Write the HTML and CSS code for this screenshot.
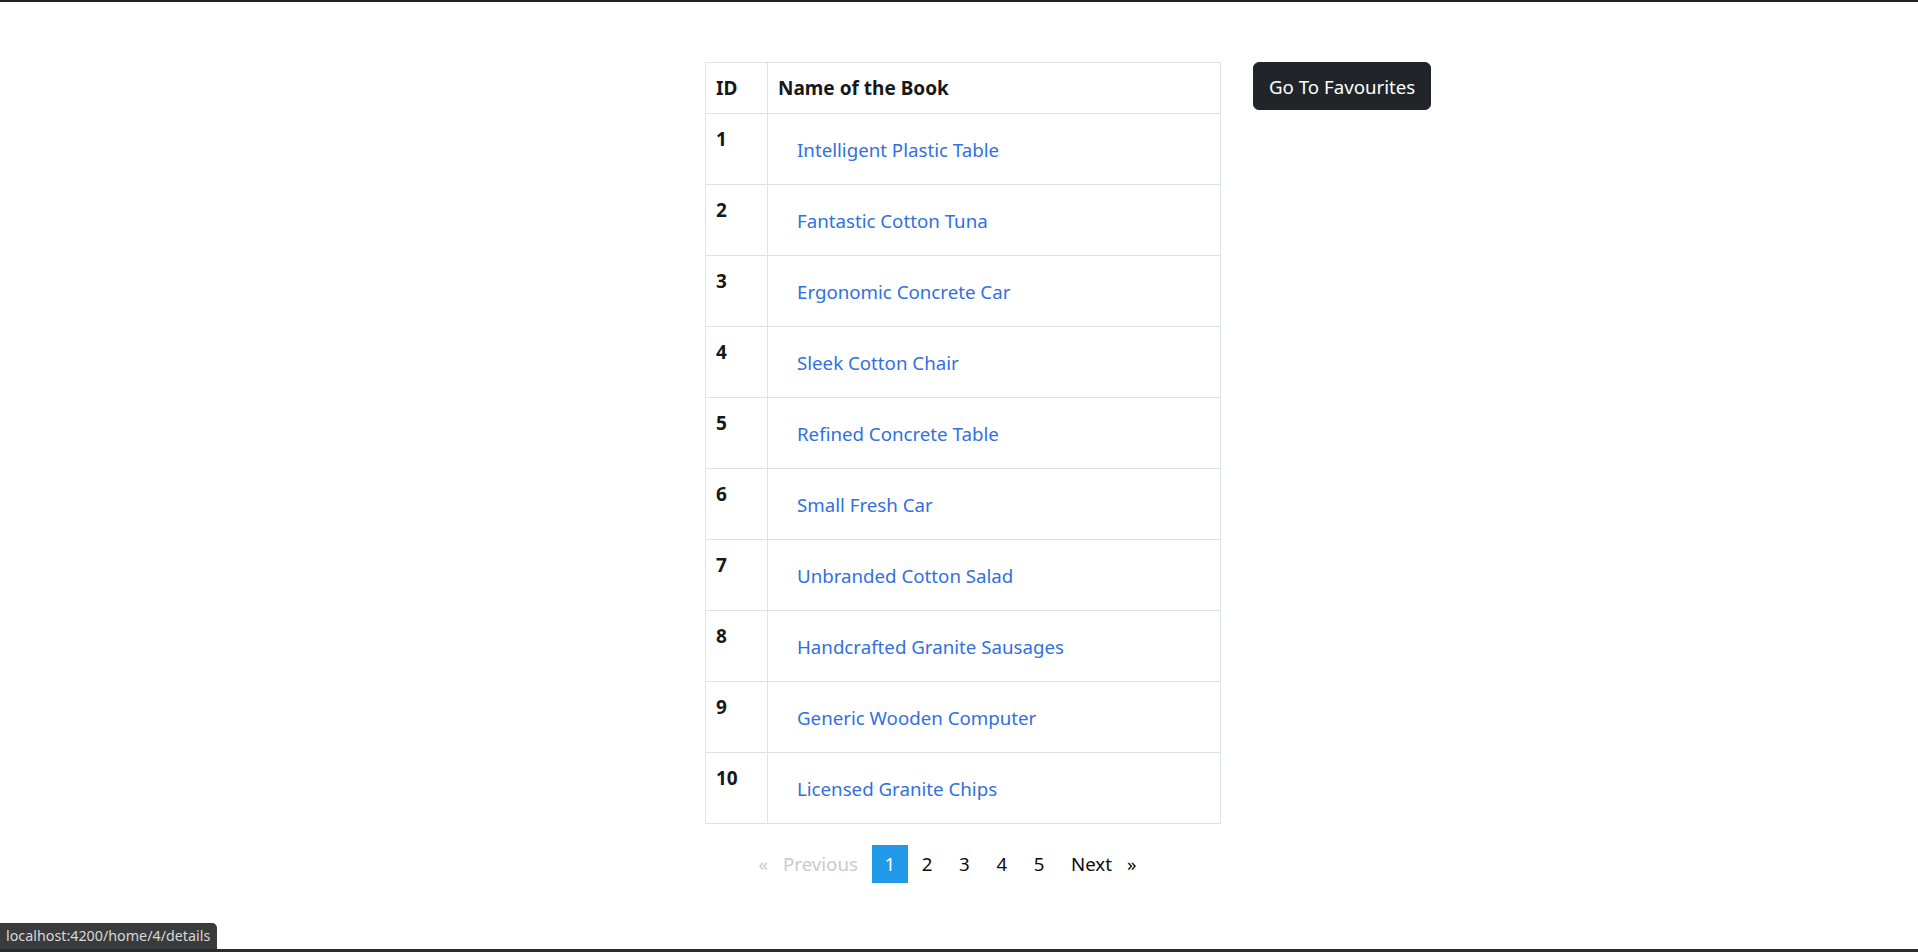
FILE: index.html
```html
<!DOCTYPE html>
<html lang="en">
<head>
<meta charset="utf-8">
<title>Books</title>
<link rel="stylesheet" href="styles.css">
</head>
<body>
<main class="page">
  <section class="list">
    <table class="books">
      <colgroup><col class="col-id"><col></colgroup>
      <thead>
        <tr><th>ID</th><th>Name of the Book</th></tr>
      </thead>
      <tbody>
        <tr><th>1</th><td><a class="book-link" href="#">Intelligent Plastic Table</a></td></tr>
        <tr><th>2</th><td><a class="book-link" href="#">Fantastic Cotton Tuna</a></td></tr>
        <tr><th>3</th><td><a class="book-link" href="#">Ergonomic Concrete Car</a></td></tr>
        <tr><th>4</th><td><a class="book-link" href="#">Sleek Cotton Chair</a></td></tr>
        <tr><th>5</th><td><a class="book-link" href="#">Refined Concrete Table</a></td></tr>
        <tr><th>6</th><td><a class="book-link" href="#">Small Fresh Car</a></td></tr>
        <tr><th>7</th><td><a class="book-link" href="#">Unbranded Cotton Salad</a></td></tr>
        <tr><th>8</th><td><a class="book-link" href="#">Handcrafted Granite Sausages</a></td></tr>
        <tr><th>9</th><td><a class="book-link" href="#">Generic Wooden Computer</a></td></tr>
        <tr><th>10</th><td><a class="book-link" href="#">Licensed Granite Chips</a></td></tr>
      </tbody>
    </table>
    <nav class="pager">
      <ul>
        <li class="prev disabled"><span class="arrow-l">«</span>Previous</li>
        <li class="current">1</li>
        <li><a href="#">2</a></li>
        <li><a href="#">3</a></li>
        <li><a href="#">4</a></li>
        <li><a href="#">5</a></li>
        <li class="next"><a href="#">Next<span class="arrow-r">»</span></a></li>
      </ul>
    </nav>
  </section>
  <a class="fav-btn" href="#">Go To Favourites</a>
</main>
<div class="status">localhost:4200/home/4/details</div>
<div class="bottom-line"></div>
</body>
</html>
```
FILE: styles.css
```css
html, body {
  margin: 0;
  padding: 0;
  background: #fff;
}
body {
  border-top: 2px solid #222;
  font-family: "Noto Sans", "Open Sans", sans-serif;
  color: #212529;
  height: 950px;
  box-sizing: border-box;
  overflow: hidden;
}
.page {
  display: flex;
  align-items: flex-start;
  gap: 66px;
  padding: 60px 0 0 705px;
}
.list {
  width: 482px;
}
.books {
  width: 516px;
  border-collapse: collapse;
  table-layout: fixed;
  font-size: 19px;
}
.col-id {
  width: 62px;
}
.books th,
.books td {
  border: 1px solid #dee2e6;
  padding: 10px;
  line-height: 30px;
  text-align: left;
  vertical-align: top;
  font-weight: 700;
  color: #161819;
}
.books td {
  font-weight: 400;
}
.book-link {
  display: inline-block;
  padding: 11px 16px 9px 19px;
  line-height: 30px;
  color: #3170e0;
  text-decoration: none;
  font-size: 18.7px;
}
.pager {
  margin-top: 21px;
  padding-left: 4px;
  text-align: center;
}
.pager ul {
  list-style: none;
  margin: 0;
  padding: 0;
  display: inline-flex;
  font-size: 18.7px;
  line-height: 30px;
}
.pager li {
  margin-right: 1px;
  padding: 4px 12.8px;
  color: #0a0a0a;
}
.pager li a {
  color: #0a0a0a;
  text-decoration: none;
}
.pager li:has(a) {
  padding: 0;
}
.pager li a {
  display: block;
  padding: 4px 12.8px;
}
.pager .disabled {
  color: #cacaca;
}
.pager .current {
  background: #2199e8;
  color: #fefefe;
}
.arrow-l {
  margin-right: 15px;
}
.arrow-r {
  margin-left: 15px;
}
.fav-btn {
  display: inline-block;
  background: #212529;
  color: #fff;
  border: 1px solid #212529;
  border-radius: 6px;
  padding: 9px 15px 7px;
  font-size: 18.7px;
  line-height: 30px;
  text-decoration: none;
}
.status {
  position: fixed;
  left: 0;
  bottom: 3px;
  height: 26px;
  padding: 0 7px 0 6px;
  background: #3a3b3d;
  color: #d8d8d8;
  font-size: 14.3px;
  line-height: 26px;
  border-top-right-radius: 5px;
}
.bottom-line {
  position: fixed;
  left: 0;
  right: 0;
  bottom: 0;
  height: 3px;
  background: #2b2b2b;
}
```
